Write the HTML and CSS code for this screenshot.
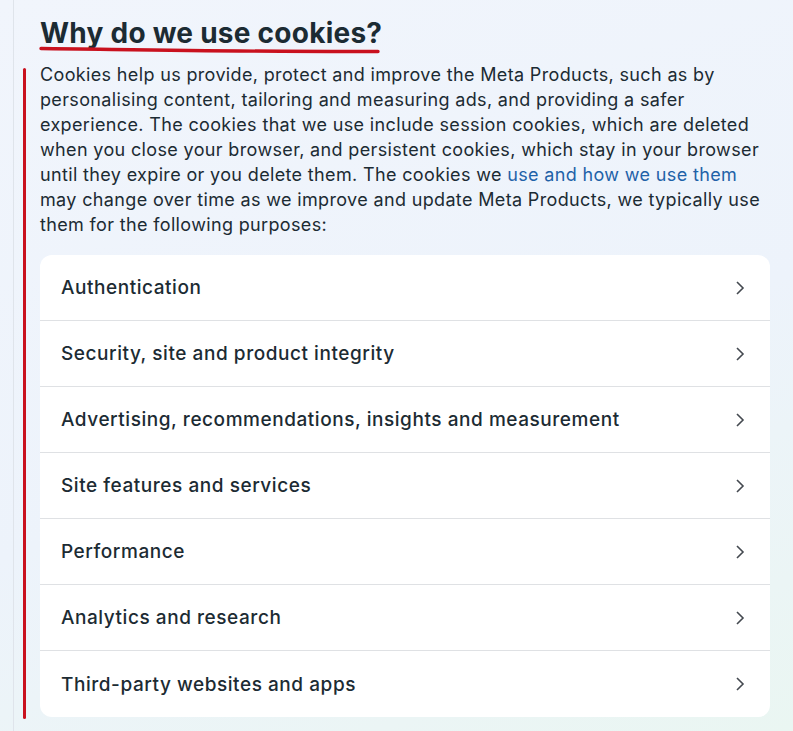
FILE: index.html
```html
<!DOCTYPE html>
<html lang="en">
<head>
  <meta charset="UTF-8">
  <title>Why do we use cookies?</title>
  <link rel="stylesheet" href="styles.css">
</head>
<body>
  <div class="page">
    <!-- 見出し -->
    <h2 class="title">Why do we use cookies?</h2>

    <div class="section">
      <p class="intro">
        Cookies help us provide, protect and improve the Meta Products, such as by
        personalising content, tailoring and measuring ads, and providing a safer
        experience. The cookies that we use include session cookies, which are deleted
        when you close your browser, and persistent cookies, which stay in your browser
        until they expire or you delete them. The cookies we <a href="#" class="link">use and how we use them</a>
        may change over time as we improve and update Meta Products, we typically use
        them for the following purposes:
      </p>

      <!-- 目的の一覧 -->
      <div class="card">
        <div class="row"><span>Authentication</span><svg class="chev" viewBox="0 0 10 16"><path d="M2 2l6 6-6 6"/></svg></div>
        <div class="row"><span>Security, site and product integrity</span><svg class="chev" viewBox="0 0 10 16"><path d="M2 2l6 6-6 6"/></svg></div>
        <div class="row"><span>Advertising, recommendations, insights and measurement</span><svg class="chev" viewBox="0 0 10 16"><path d="M2 2l6 6-6 6"/></svg></div>
        <div class="row"><span>Site features and services</span><svg class="chev" viewBox="0 0 10 16"><path d="M2 2l6 6-6 6"/></svg></div>
        <div class="row"><span>Performance</span><svg class="chev" viewBox="0 0 10 16"><path d="M2 2l6 6-6 6"/></svg></div>
        <div class="row"><span>Analytics and research</span><svg class="chev" viewBox="0 0 10 16"><path d="M2 2l6 6-6 6"/></svg></div>
        <div class="row"><span>Third-party websites and apps</span><svg class="chev" viewBox="0 0 10 16"><path d="M2 2l6 6-6 6"/></svg></div>
      </div>
    </div>

    <!-- 赤いマーク -->
    <svg class="mark-under" viewBox="0 0 342 8"><path d="M2 2.5 C 90 3.5, 220 6, 339 5.5"/></svg>
    <div class="mark-side"></div>
  </div>
</body>
</html>
```

FILE: styles.css
```css
body {
  margin: 0;
  height: 731px;
  overflow: hidden;
  font-family: "Inter", "Liberation Sans", sans-serif;
  color: #1c2b33;
  background: linear-gradient(160deg, #f1f5fc 0%, #edf3fb 55%, #eaf6f2 100%);
}

.page {
  position: relative;
  margin-left: 13px;
  border-left: 1px solid #dfe4eb;
  padding: 15px 23px 0 26px;
  height: 100%;
}

.title {
  font-size: 28px;
  font-weight: 700;
  line-height: 36px;
  margin: 0 0 11px 0;
  letter-spacing: 0.25px;
}

.intro {
  font-size: 18px;
  line-height: 25px;
  letter-spacing: 0.35px;
  margin: 0 0 18px 0;
}

.link {
  color: #1f62a8;
  text-decoration: none;
}

.card {
  background: #ffffff;
  border-radius: 12px;
  overflow: hidden;
}

.row {
  height: 65px;
  display: flex;
  align-items: center;
  justify-content: space-between;
  padding: 0 25px 0 21px;
  font-size: 19px;
  font-weight: 500;
  letter-spacing: 0.55px;
  border-bottom: 1px solid #dfe1e4;
}

.row:last-child {
  height: 66px;
  border-bottom: none;
}

.chev {
  width: 10px;
  height: 16px;
  fill: none;
  stroke: #444950;
  stroke-width: 1.6;
}

/* 注釈の赤線 */
.mark-under {
  position: absolute;
  left: 25px;
  top: 46px;
  width: 342px;
  height: 8px;
  fill: none;
  stroke: #c9111e;
  stroke-width: 3.4;
  stroke-linecap: round;
}

.mark-side {
  position: absolute;
  left: 9px;
  top: 68px;
  width: 3px;
  height: 651px;
  background: #c9111e;
  border-radius: 2px;
}
```
